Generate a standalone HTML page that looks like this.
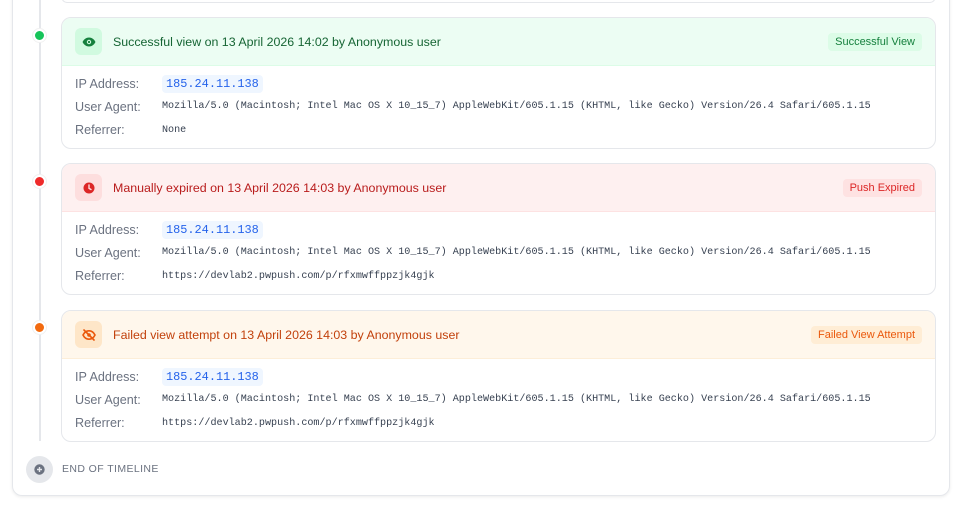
<!DOCTYPE html>
<html><head><style>
*{box-sizing:border-box;margin:0;padding:0}
body{width:960px;height:506px;background:#fff;font-family:"Liberation Sans",sans-serif;position:relative;overflow:hidden}
.outer{position:absolute;left:12px;top:-10px;width:938px;height:506px;border:1px solid #e5e7eb;border-radius:10px;box-shadow:0 1px 3px rgba(0,0,0,.08)}
.line{position:absolute;left:39px;top:0;width:2px;height:441px;background:#e5e7eb}
.topcard{position:absolute;left:61px;top:-10px;width:875px;height:13px;border:1px solid #e5e7eb;border-radius:10px;background:#fff}
.dot{position:absolute;left:33px;width:13px;height:13px;border-radius:50%;border:2px solid #fff;box-shadow:0 0 0 1px #f1f1f1}
.card{position:absolute;left:61px;width:875px;height:132px;border:1px solid #e5e7eb;border-radius:10px;overflow:hidden;background:#fff}
.hd{height:48px;display:flex;align-items:center;padding:0 13px;border-bottom:1px solid}
.ic{width:27px;height:27px;border-radius:6px;display:flex;align-items:center;justify-content:center;margin-right:11px}
.tt{font-size:12.4px;flex:1}
.bd{font-size:11px;padding:3px 7px;border-radius:4px}
.row{display:flex;align-items:center;height:23.3px;padding-left:13px}
.bdy{padding-top:6px}
.lb{width:87px;font-size:12.6px;color:#6b7280}
.mono{font-family:"Liberation Mono",monospace;font-size:10.1px;color:#374151}
.ip{font-family:"Liberation Mono",monospace;font-size:11.9px;color:#2563eb;background:#eff6ff;padding:2px 4px;border-radius:4px}
.end{position:absolute;left:26px;top:456px;width:27px;height:27px;border-radius:50%;background:#e5e7eb;display:flex;align-items:center;justify-content:center}
.endt{position:absolute;left:62px;top:463px;font-size:10.5px;color:#6b7280;letter-spacing:.4px}
</style></head><body>
<div class="outer"></div>
<div class="line"></div>
<div class="topcard"></div>

<div class="dot" style="top:29px;background:#16c45a"></div>
<div class="card" style="top:17px">
<div class="hd" style="background:#ecfdf3;border-color:#dcfce7">
<div class="ic" style="background:#d1fae0"><svg width="14" height="10" viewBox="0 0 14 10"><path d="M0.5 5C2 2 4.5 0.5 7 0.5S12 2 13.5 5C12 8 9.5 9.5 7 9.5S2 8 0.5 5Z" fill="#15803d"/><circle cx="7" cy="5" r="2.2" fill="#d1fae0"/><circle cx="7" cy="5" r="1.1" fill="#15803d"/></svg></div>
<div class="tt" style="color:#166534">Successful view on 13 April 2026 14:02 by Anonymous user</div>
<div class="bd" style="background:#dcfce7;color:#15803d">Successful View</div></div>
<div class="bdy">
<div class="row"><span class="lb">IP Address:</span><span class="ip">185.24.11.138</span></div>
<div class="row"><span class="lb">User Agent:</span><span class="mono">Mozilla/5.0 (Macintosh; Intel Mac OS X 10_15_7) AppleWebKit/605.1.15 (KHTML, like Gecko) Version/26.4 Safari/605.1.15</span></div>
<div class="row"><span class="lb">Referrer:</span><span class="mono">None</span></div>
</div></div>

<div class="dot" style="top:175px;background:#ef2b2b"></div>
<div class="card" style="top:163px">
<div class="hd" style="background:#fef0f0;border-color:#fde2e2">
<div class="ic" style="background:#fddede"><svg width="12" height="12" viewBox="0 0 12 12"><circle cx="6" cy="6" r="5.5" fill="#dc2626"/><path d="M6 3V6.3L8 7.5" stroke="#fddede" stroke-width="1.4" fill="none" stroke-linecap="round"/></svg></div>
<div class="tt" style="color:#b91c1c">Manually expired on 13 April 2026 14:03 by Anonymous user</div>
<div class="bd" style="background:#fee2e2;color:#dc2626">Push Expired</div></div>
<div class="bdy">
<div class="row"><span class="lb">IP Address:</span><span class="ip">185.24.11.138</span></div>
<div class="row"><span class="lb">User Agent:</span><span class="mono">Mozilla/5.0 (Macintosh; Intel Mac OS X 10_15_7) AppleWebKit/605.1.15 (KHTML, like Gecko) Version/26.4 Safari/605.1.15</span></div>
<div class="row"><span class="lb">Referrer:</span><span class="mono">https://devlab2.pwpush.com/p/rfxmwffppzjk4gjk</span></div>
</div></div>

<div class="dot" style="top:321px;background:#f26a0f"></div>
<div class="card" style="top:310px">
<div class="hd" style="background:#fff7ec;border-color:#fdeed8">
<div class="ic" style="background:#fee6c8"><svg width="14" height="12" viewBox="0 0 14 12"><path d="M1 6C2.5 3 4.5 1.8 7 1.8S11.5 3 13 6C11.5 9 9.5 10.2 7 10.2S2.5 9 1 6Z" fill="none" stroke="#ea580c" stroke-width="1.6"/><circle cx="7" cy="6" r="1.8" fill="#ea580c"/><path d="M2 1L12 11" stroke="#ea580c" stroke-width="1.6" stroke-linecap="round"/></svg></div>
<div class="tt" style="color:#c2410c">Failed view attempt on 13 April 2026 14:03 by Anonymous user</div>
<div class="bd" style="background:#ffedd5;color:#ea580c">Failed View Attempt</div></div>
<div class="bdy">
<div class="row"><span class="lb">IP Address:</span><span class="ip">185.24.11.138</span></div>
<div class="row"><span class="lb">User Agent:</span><span class="mono">Mozilla/5.0 (Macintosh; Intel Mac OS X 10_15_7) AppleWebKit/605.1.15 (KHTML, like Gecko) Version/26.4 Safari/605.1.15</span></div>
<div class="row"><span class="lb">Referrer:</span><span class="mono">https://devlab2.pwpush.com/p/rfxmwffppzjk4gjk</span></div>
</div></div>

<div class="end"><svg width="11" height="11" viewBox="0 0 11 11"><circle cx="5.5" cy="5.5" r="5.2" fill="#6b7280"/><path d="M5.5 3V8M3 5.5H8" stroke="#e5e7eb" stroke-width="1.4"/></svg></div>
<div class="endt">END OF TIMELINE</div>
</body></html>
